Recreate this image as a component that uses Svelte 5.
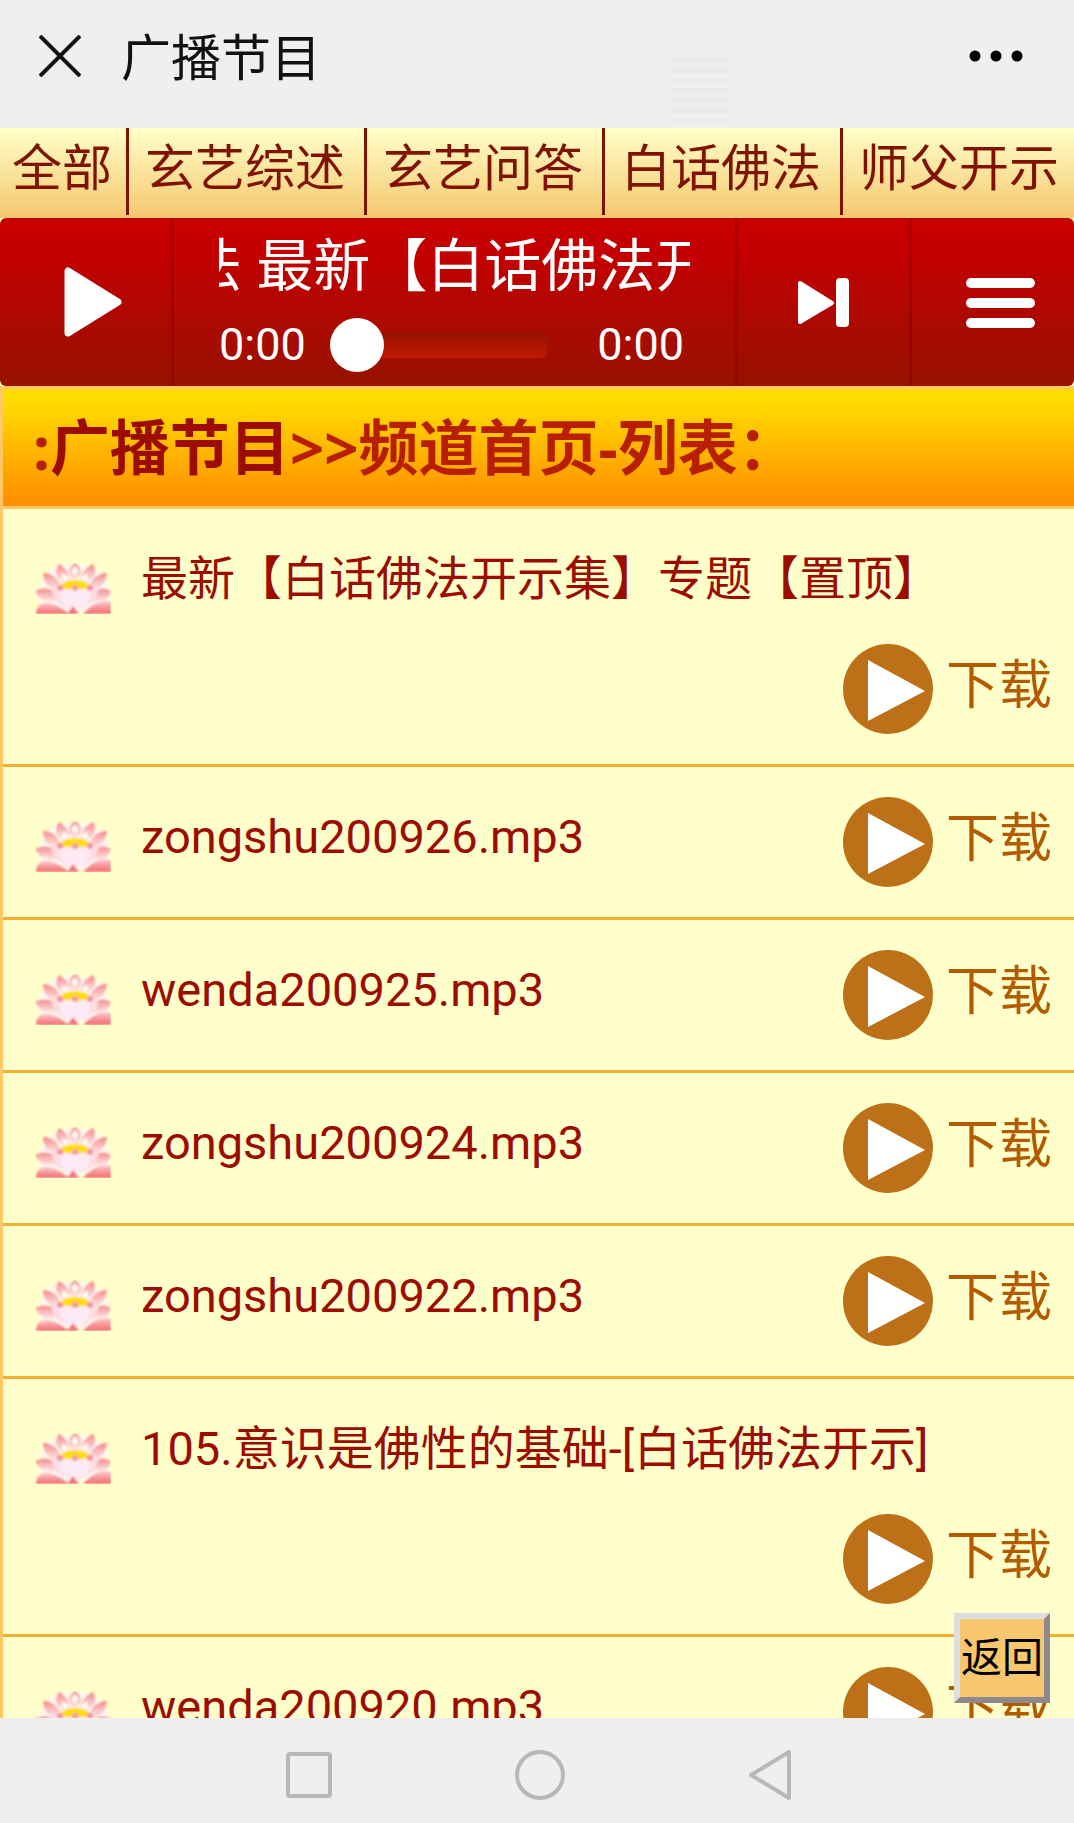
<script>
  let position = $state(0);

  const channels = ["全部", "玄艺综述", "玄艺问答", "白话佛法", "师父开示"];

  const programs = [
    "最新【白话佛法开示集】专题【置顶】",
    "zongshu200926.mp3",
    "wenda200925.mp3",
    "zongshu200924.mp3",
    "zongshu200922.mp3",
    "105.意识是佛性的基础-[白话佛法开示]",
    "wenda200920.mp3",
  ];
</script>

{#snippet lotus()}
  <svg class="lotus" viewBox="0 0 76 51" aria-hidden="true">
    <defs>
      <linearGradient id="petal" x1="0" y1="0" x2="0" y2="1">
        <stop offset="0" stop-color="#f58a8a" />
        <stop offset="0.4" stop-color="#f9b4b4" />
        <stop offset="1" stop-color="#fff0ee" />
      </linearGradient>
      <linearGradient id="base" x1="0" y1="1" x2="0" y2="0">
        <stop offset="0" stop-color="#f4696c" />
        <stop offset="1" stop-color="#fbc8ca" />
      </linearGradient>
      <filter id="soft"><feGaussianBlur stdDeviation="0.9" /></filter>
    </defs>
    <g filter="url(#soft)">
      <path d="M9 14Q16 4 26 3L38 1L54 3Q64 6 70 14L75 30L70 48H8L2 30Z" fill="#fff6ee" />
      <g fill="url(#petal)">
        <path d="M40 0C31 6 33 13 40 19C47 13 49 6 40 0Z" />
        <path d="M24 1C18 9 21 17 32 21C37 14 32 5 24 1Z" />
        <path d="M58 1C63 9 59 17 48 21C43 14 49 5 58 1Z" />
        <path d="M8 10C8 20 15 27 25 28C27 18 18 10 8 10Z" />
        <path d="M72 10C71 20 64 27 55 28C53 18 62 10 72 10Z" />
        <path d="M0 28C5 38 16 42 29 38C23 27 10 22 0 28Z" />
        <path d="M76 28C73 38 64 42 51 38C57 27 67 22 76 28Z" />
      </g>
      <path d="M40 3L44 8L40 13L36 8ZM28 10L33 14L32 19L27 16ZM52 10L47 14L48 19L53 16Z" fill="#fffaf4" />
      <path d="M1 51C1 36 18 37 34 51Z" fill="url(#base)" />
      <path d="M76 51V39C66 36 55 42 48 51Z" fill="url(#base)" />
      <path d="M16 24C24 27 32 34 34 46C24 42 17 35 16 24ZM64 24C56 27 48 34 46 46C56 42 63 35 64 24Z" fill="#fcdde4" />
      <ellipse cx="40" cy="32" rx="15" ry="14" fill="#fdeaf4" />
      <path d="M24 24Q28 17 40 17Q52 17 56 24Q50 27 40 26Q30 27 24 24Z" fill="#ffdc10" />
      <circle cx="25" cy="25" r="3" fill="#f78ea0" />
      <circle cx="55" cy="25" r="3" fill="#f78ea0" />
      <circle cx="40" cy="25" r="3" fill="#f796a4" />
      <path d="M38 43L44 51H32Z" fill="#f4707a" />
    </g>
  </svg>
{/snippet}

<div class="screen">
  <header class="titlebar">
    <button aria-label="关闭">
      <svg width="42" height="42" viewBox="0 0 42 42">
        <path d="M1 1L41 41M41 1L1 41" stroke="#111" stroke-width="4" />
      </svg>
    </button>
    <h1>广播节目</h1>
    <div class="stripes"></div>
    <button aria-label="更多">
      <svg width="54" height="12" viewBox="0 0 54 12">
        <circle cx="6" cy="6" r="5.5" />
        <circle cx="27" cy="6" r="5.5" />
        <circle cx="48" cy="6" r="5.5" />
      </svg>
    </button>
  </header>

  <nav class="channels">
    {#each channels as channel}
      <a href="#list">{channel}</a>
    {/each}
  </nav>

  <section class="player">
    <button class="play" aria-label="播放">
      <svg width="58" height="70" viewBox="0 0 58 70">
        <path d="M4 4V66L54 35Z" fill="#fff" stroke="#fff" stroke-width="7" stroke-linejoin="round" />
      </svg>
    </button>
    <div class="track">
      <p class="marquee">法 最新【白话佛法开示集】专题</p>
      <div class="progress">
        <span>0:00</span>
        <input type="range" min="0" max="100" bind:value={position} aria-label="播放进度" />
        <span>0:00</span>
      </div>
    </div>
    <button class="next" aria-label="下一首">
      <svg width="51" height="49" viewBox="0 0 51 49">
        <path d="M2 5V44L34 25Z" fill="#fff" stroke="#fff" stroke-width="4" stroke-linejoin="round" />
        <rect x="38" width="13" height="49" rx="4" fill="#fff" />
      </svg>
    </button>
    <button class="menu" aria-label="播放列表">
      <svg width="69" height="50" viewBox="0 0 69 50" fill="#fff">
        <rect width="69" height="10" rx="5" />
        <rect y="20" width="69" height="10" rx="5" />
        <rect y="40" width="69" height="10" rx="5" />
      </svg>
    </button>
  </section>

  <main id="list">
    <h2>:<a href="#list">广播节目</a>&gt;&gt;频道首页-列表：</h2>
    <ul>
      {#each programs as program}
        <li>
          <a class="program" href="#list">
            {@render lotus()}
            <span>{program}</span>
          </a>
          <div class="actions">
            <button class="listen" aria-label="播放 {program}">
              <svg width="90" height="90" viewBox="0 0 90 90">
                <circle cx="45" cy="45" r="45" fill="#bc7118" />
                <path d="M25 16V77L82 47Z" fill="#fff" />
              </svg>
            </button>
            <a class="download" href="#list">下载</a>
          </div>
        </li>
      {/each}
    </ul>
    <button class="back">返回</button>
  </main>

  <footer>
    <button aria-label="最近任务">
      <svg width="50" height="50" viewBox="0 0 50 50">
        <rect x="4" y="4" width="42" height="42" rx="2" />
      </svg>
    </button>
    <button aria-label="主屏幕">
      <svg width="50" height="50" viewBox="0 0 50 50">
        <circle cx="25" cy="25" r="23" />
      </svg>
    </button>
    <button aria-label="返回上一页">
      <svg width="50" height="50" viewBox="0 0 50 50">
        <path d="M43 2V48L5 25Z" stroke-linejoin="round" />
      </svg>
    </button>
  </footer>
</div>

<style>
  :global(body) {
    margin: 0;
    background: #ffffcc;
  }

  .screen {
    display: flex;
    flex-direction: column;
    height: 100vh;
    overflow: hidden;
    font-family: Roboto, "Noto Sans CJK SC", sans-serif;
  }

  button {
    display: flex;
    align-items: center;
    justify-content: center;
    margin: 0;
    padding: 0;
    border: 0;
    background: none;
    font-family: inherit;
  }

  a {
    color: inherit;
    text-decoration: none;
  }

  h1,
  h2,
  p,
  ul {
    margin: 0;
    padding: 0;
  }

  .titlebar {
    display: flex;
    flex: none;
    align-items: center;
    height: 112px;
    padding: 0 51px 16px 39px;
    background: #efefef;
  }

  h1 {
    flex: 1;
    margin-left: 40px;
    padding-top: 6px;
    color: #111;
    font-size: 50px;
    font-weight: 400;
    line-height: 60px;
  }

  .stripes {
    align-self: flex-end;
    width: 58px;
    height: 70px;
    margin: 0 240px -16px 0;
    background: repeating-linear-gradient(#e8eae8 0 5px, #eeefee 5px 10px);
  }

  .channels {
    display: flex;
    flex: none;
    height: 90px;
    overflow: hidden;
    background: linear-gradient(#ffffc8, #f5c76e);
    color: #7f1200;
    font-size: 50px;
    line-height: 82px;
    white-space: nowrap;
  }

  .channels a {
    height: 87px;
    padding: 0 19px 0 16px;
    border-right: 3px solid #7f1200;
  }

  .channels a:first-child {
    padding: 0 14px 0 12px;
  }

  .channels a:last-child {
    border-right: 0;
  }

  .player {
    display: flex;
    flex: none;
    height: 168px;
    border-radius: 6px;
    background: linear-gradient(#c80000, #c40000 20%, #991100 95%);
    color: #fff;
  }

  .play,
  .next {
    width: 174px;
    border-right: 3px solid rgba(110, 0, 0, 0.3);
  }

  .play {
    padding-left: 14px;
  }

  .menu {
    width: 162px;
    padding: 2px 0 0 14px;
  }

  .track {
    flex: 1;
    min-width: 0;
    padding: 16px 45px 0 45px;
    border-right: 3px solid rgba(110, 0, 0, 0.3);
  }

  .marquee {
    overflow: hidden;
    font-size: 57px;
    line-height: 66px;
    text-indent: -34px;
    white-space: nowrap;
  }

  .progress {
    display: flex;
    align-items: center;
    margin-right: 6px;
    font-size: 45px;
    line-height: 90px;
  }

  input {
    flex: 1;
    min-width: 0;
    height: 54px;
    margin: 0 50px 0 24px;
    appearance: none;
    background: none;
  }

  input::-webkit-slider-runnable-track {
    height: 26px;
    border-radius: 6px;
    background: linear-gradient(#941000, #c01a00);
  }

  input::-webkit-slider-thumb {
    width: 54px;
    height: 54px;
    margin-top: -14px;
    appearance: none;
    border-radius: 50%;
    background: #fff;
  }

  main {
    position: relative;
    flex: 1;
    min-height: 0;
    overflow: hidden;
    border-left: 3px solid #ffc864;
    background: #ffffcc;
  }

  h2 {
    padding-left: 30px;
    border: solid #ffc864;
    border-width: 3px 0;
    background: linear-gradient(#ffdc00 10%, #ff9000 95%);
    color: #b81e00;
    font-family: "Noto Sans", "Noto Sans CJK SC", sans-serif;
    font-size: 60px;
    line-height: 117px;
    white-space: nowrap;
  }

  h2 a {
    color: #9c0c00;
  }

  ul {
    list-style: none;
  }

  li {
    display: flex;
    flex-wrap: wrap;
    align-items: flex-start;
    gap: 25px;
    padding: 30px 22px 30px 32px;
    border-bottom: 3px solid #f0b133;
  }

  .program {
    display: flex;
    align-items: flex-start;
    gap: 30px;
    color: #9c0c00;
    font-size: 47px;
    line-height: 80px;
  }

  .lotus {
    flex: none;
    width: 76px;
    height: 51px;
    margin-top: 24px;
  }

  .actions {
    display: flex;
    gap: 13px;
    margin-left: auto;
  }

  .download {
    color: #b35b00;
    font-size: 53px;
    line-height: 84px;
  }

  .back {
    position: absolute;
    right: 24px;
    bottom: 15px;
    width: 96px;
    height: 90px;
    padding-bottom: 8px;
    border: 6px solid;
    border-color: #dedee0 #8d898d #8d898d #dedee0;
    background: #f6c76c;
    color: #000;
    font-size: 41px;
  }

  footer {
    display: flex;
    flex: none;
    justify-content: center;
    height: 97px;
    padding: 8px 0 0 6px;
    background: #efefef;
  }

  footer button {
    width: 231px;
  }

  footer svg {
    fill: none;
    stroke: #b8b8b8;
    stroke-width: 4;
  }
</style>
